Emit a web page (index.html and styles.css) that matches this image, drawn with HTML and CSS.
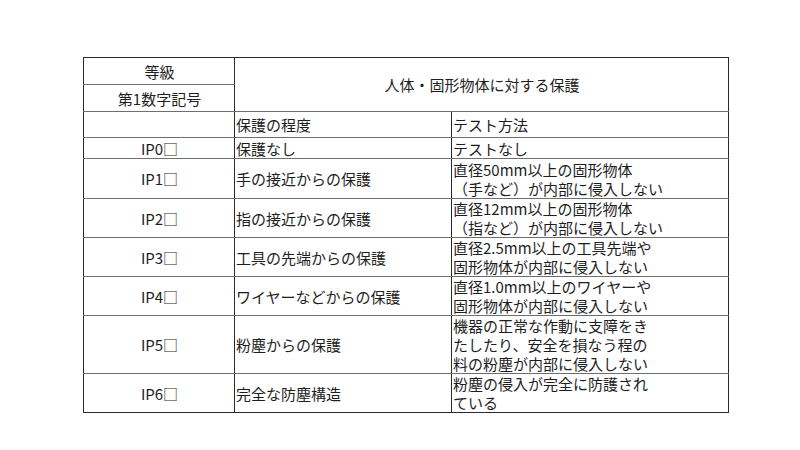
FILE: index.html
```html
<!DOCTYPE html>
<html lang="ja">
<head>
<meta charset="utf-8">
<title>IP保護等級</title>
<link rel="stylesheet" href="styles.css">
</head>
<body>
<div class="page">
  <table class="ip-table">
    <colgroup>
      <col class="c1">
      <col class="c2">
      <col class="c3">
    </colgroup>
    <tr class="r27">
      <td class="grade">等級</td>
      <td class="head" colspan="2" rowspan="2">人体・固形物体に対する保護</td>
    </tr>
    <tr class="r27">
      <td class="grade">第1数字記号</td>
    </tr>
    <tr class="r26 strong">
      <td class="grade"></td>
      <td class="desc sub">保護の程度</td>
      <td class="test sub">テスト方法</td>
    </tr>
    <tr class="r21 strong">
      <td class="grade">IP0□</td>
      <td class="desc">保護なし</td>
      <td class="test">テストなし</td>
    </tr>
    <tr class="r40">
      <td class="grade">IP1□</td>
      <td class="desc">手の接近からの保護</td>
      <td class="test">直径50mm以上の固形物体<br>（手など）が内部に侵入しない</td>
    </tr>
    <tr class="r39">
      <td class="grade">IP2□</td>
      <td class="desc">指の接近からの保護</td>
      <td class="test">直径12mm以上の固形物体<br>（指など）が内部に侵入しない</td>
    </tr>
    <tr class="r39">
      <td class="grade">IP3□</td>
      <td class="desc">工具の先端からの保護</td>
      <td class="test">直径2.5mm以上の工具先端や<br>固形物体が内部に侵入しない</td>
    </tr>
    <tr class="r39">
      <td class="grade">IP4□</td>
      <td class="desc">ワイヤーなどからの保護</td>
      <td class="test">直径1.0mm以上のワイヤーや<br>固形物体が内部に侵入しない</td>
    </tr>
    <tr class="r58">
      <td class="grade">IP5□</td>
      <td class="desc">粉塵からの保護</td>
      <td class="test">機器の正常な作動に支障をき<br>たしたり、安全を損なう程の<br>料の粉塵が内部に侵入しない</td>
    </tr>
    <tr class="r39">
      <td class="grade">IP6□</td>
      <td class="desc">完全な防塵構造</td>
      <td class="test">粉塵の侵入が完全に防護され<br>ている</td>
    </tr>
  </table>
</div>
</body>
</html>
```
FILE: styles.css
```css
html, body {
  margin: 0;
  padding: 0;
  background: #ffffff;
}

.page {
  padding: 57px 0 0 83px;
}

.ip-table {
  border-collapse: collapse;
  table-layout: fixed;
  width: 645px;
  font-family: "Noto Sans CJK JP", "Noto Sans", sans-serif;
  font-size: 15px;
  line-height: 19px;
  color: #1e1e1e;
}

.c1 { width: 151px; }
.c2 { width: 217px; }
.c3 { width: 277px; }

.ip-table td {
  border: 1px solid #6e6e6e;
  border-left-color: #2a2a2a;
  border-right-color: #2a2a2a;
  padding: 0 0 0 1px;
  vertical-align: middle;
  white-space: nowrap;
  overflow: hidden;
}

.r27 { height: 27px; }
.r26 { height: 26px; }
.r21 { height: 21px; }
.r40 { height: 40px; }
.r39 { height: 39px; }
.r58 { height: 58px; }

.strong td {
  border-top-color: #2a2a2a;
}

.ip-table tr:first-child td {
  border-top-color: #2a2a2a;
}

.ip-table tr:last-child td {
  border-bottom-color: #2a2a2a;
}

.grade {
  text-align: center;
  padding-top: 3px;
}

.head {
  text-align: center;
  padding-top: 4px;
}

.desc {
  text-align: left;
  padding-top: 3px;
}

.sub {
  padding-top: 2px;
}

.test {
  text-align: left;
  padding-top: 0;
}
```
